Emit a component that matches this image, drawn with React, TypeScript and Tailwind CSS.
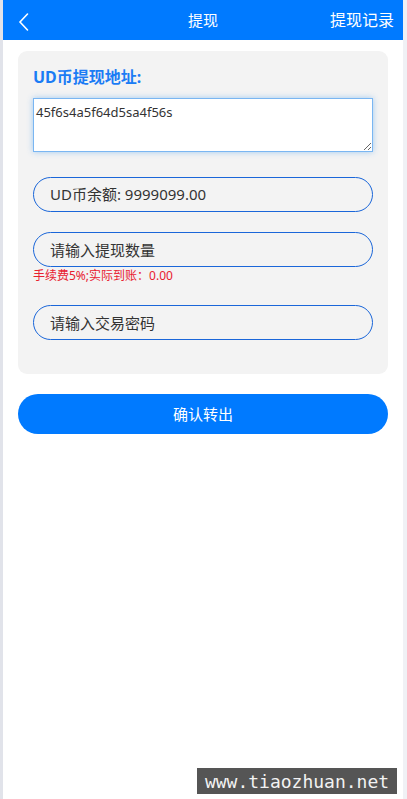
import { useState } from 'react';

const font = "font-['Noto_Sans','Noto_Sans_CJK_SC',sans-serif]";

export default function App() {
  const [address, setAddress] = useState('45f6s4a5f64d5sa4f56s');

  return (
    <div className={`relative flex min-h-[799px] w-full ${font}`}>
      <div className="w-[3px] shrink-0 bg-[#e1e3ea]" />
      <div className="w-[400px] shrink-0 bg-white">
        <header className="relative flex h-10 items-center justify-center bg-[#007aff] text-white">
          <button className="absolute left-[14px] top-[12px] p-0" aria-label="返回">
            <svg width="14" height="20" viewBox="0 0 14 20" fill="none" stroke="white" strokeWidth="1.6" strokeLinecap="round">
              <path d="M10.5 2 L3 10 L10.5 18" />
            </svg>
          </button>
          <h1 className="text-[15px] leading-none">提现</h1>
          <span className="absolute right-[9px] text-[16px] leading-none">提现记录</span>
        </header>

        <main className="px-[15px] pt-[11px]">
          <section className="rounded-[9px] bg-[#f3f3f3] px-[15px] pb-[34px] pt-[14px]">
            <h2 className="text-[16px] font-bold leading-6 text-[#1b7cf5]">UD币提现地址:</h2>
            <textarea
              value={address}
              onChange={(e) => setAddress(e.target.value)}
              className="mt-[9px] block h-[54px] w-full resize-y border border-[#7ab6f2] bg-white px-[2px] py-[3px] text-[13px] leading-5 text-[#333] shadow-[0_0_6px_rgba(60,150,240,0.45)] outline-none"
            />

            <div className="mt-[25px] flex h-[35px] items-center rounded-full border border-[#1a66d9] px-[16px] text-[15px] text-[#333]">
              UD币余额: 9999099.00
            </div>

            <input
              placeholder="请输入提现数量"
              className="mt-[20px] block h-[35px] w-full rounded-full border border-[#1a66d9] bg-transparent px-[16px] text-[15px] text-[#333] outline-none placeholder:text-[#333]"
            />
            <p className="mt-[1px] text-[12px] leading-4 text-[#e8202f]">手续费5%;实际到账：0.00</p>

            <input
              type="password"
              placeholder="请输入交易密码"
              className="mt-[21px] block h-[35px] w-full rounded-full border border-[#1a66d9] bg-transparent px-[16px] text-[15px] text-[#333] outline-none placeholder:text-[#333]"
            />
          </section>

          <button className="mt-[20px] flex h-10 w-full items-center justify-center rounded-full bg-[#007aff] text-[15px] text-white">
            确认转出
          </button>
        </main>
      </div>
      <div className="flex-1 bg-[#f0f1f5]" />

      <div className="absolute bottom-[5px] left-[197px] flex h-[26px] w-[200px] items-center justify-center bg-[#555] font-['DejaVu_Sans_Mono',monospace] text-[18px] text-[#f2f2f2]">
        www.tiaozhuan.net
      </div>
    </div>
  );
}
